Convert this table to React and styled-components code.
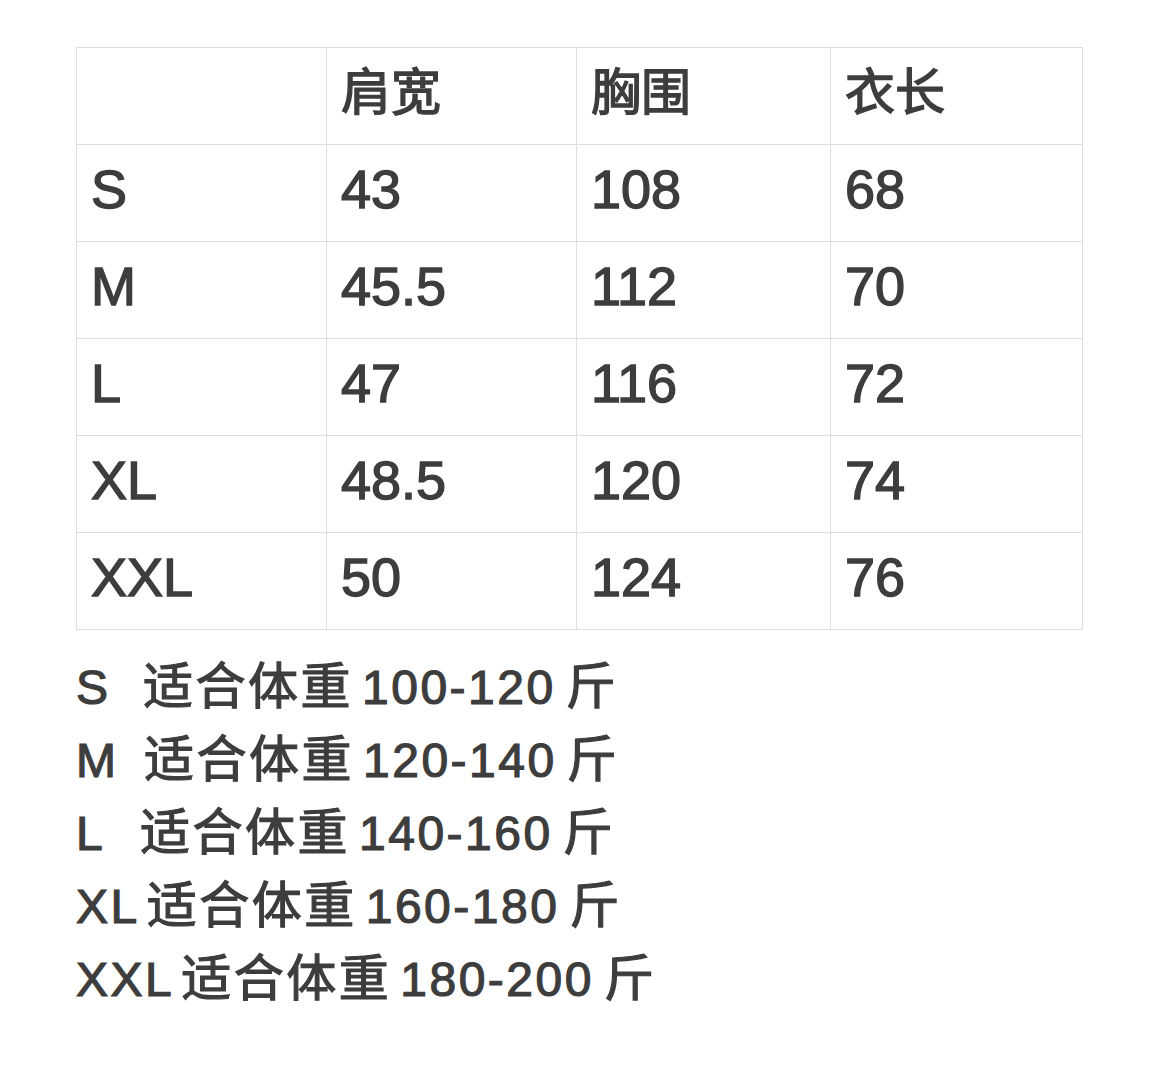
import React from 'react';
import styled, { createGlobalStyle } from 'styled-components';

const GlobalStyle = createGlobalStyle`
    body {
        margin: 0;
        background: #ffffff;
        font-family: "Liberation Sans", "Noto Sans CJK SC", sans-serif;
        color: #3d3d3d;
    }
`;

const Page = styled.div`
    width: 1158px;
    min-height: 1080px;
    padding: 47px 0 0 76px;
    box-sizing: border-box;
`;

const SizeTable = styled.table`
    border-collapse: collapse;
    table-layout: fixed;
    width: 1006px;
`;

const Col = styled.col`
    width: ${(p) => p.$w}px;
`;

const Cell = styled.td`
    border: 1px solid #dedede;
    height: 97px;
    padding: 0 0 ${(p) => (p.$head ? 7 : 9)}px 14px;
    font-size: ${(p) => (p.$head ? 50 : 54)}px;
    line-height: 1;
    vertical-align: middle;
    box-sizing: border-box;
    -webkit-text-stroke: 1.4px #3d3d3d;
`;

const Notes = styled.div`
    margin-top: 21px;
    font-size: 48px;
    line-height: 72px;
    letter-spacing: 2.5px;
    -webkit-text-stroke: 1.2px #3d3d3d;
`;

const NoteLine = styled.div`
    display: flex;
    align-items: baseline;
    white-space: nowrap;
`;

const Label = styled.span`
    min-width: ${(p) => p.$w || 0}px;
    margin-right: 7px;
`;

const Cjk = styled.span`
    font-size: 50px;
`;

const Range = styled.span`
    margin: 0 10px 0 9px;
`;

const header = ['', '肩宽', '胸围', '衣长'];
const rows = [
    ['S', '43', '108', '68'],
    ['M', '45.5', '112', '70'],
    ['L', '47', '116', '72'],
    ['XL', '48.5', '120', '74'],
    ['XXL', '50', '124', '76'],
];
const notes = [
    { size: 'S', w: 60, range: '100-120' },
    { size: 'M', w: 61, range: '120-140' },
    { size: 'L', w: 57, range: '140-160' },
    { size: 'XL', w: 0, range: '160-180' },
    { size: 'XXL', w: 0, range: '180-200' },
];

const App = () => {
    return (
        <Page>
            <GlobalStyle />
            <SizeTable>
                <colgroup>
                    <Col $w={250} />
                    <Col $w={250} />
                    <Col $w={254} />
                    <Col $w={252} />
                </colgroup>
                <tbody>
                    <tr>
                        {header.map((h, i) => (
                            <Cell key={i} $head>
                                {h}
                            </Cell>
                        ))}
                    </tr>
                    {rows.map((r) => (
                        <tr key={r[0]}>
                            {r.map((c, i) => (
                                <Cell key={i}>{c}</Cell>
                            ))}
                        </tr>
                    ))}
                </tbody>
            </SizeTable>
            <Notes>
                {notes.map((n) => (
                    <NoteLine key={n.size}>
                        <Label $w={n.w}>{n.size}</Label>
                        <Cjk>适合体重</Cjk>
                        <Range>{n.range}</Range>
                        <Cjk>斤</Cjk>
                    </NoteLine>
                ))}
            </Notes>
        </Page>
    );
};

export default App;
